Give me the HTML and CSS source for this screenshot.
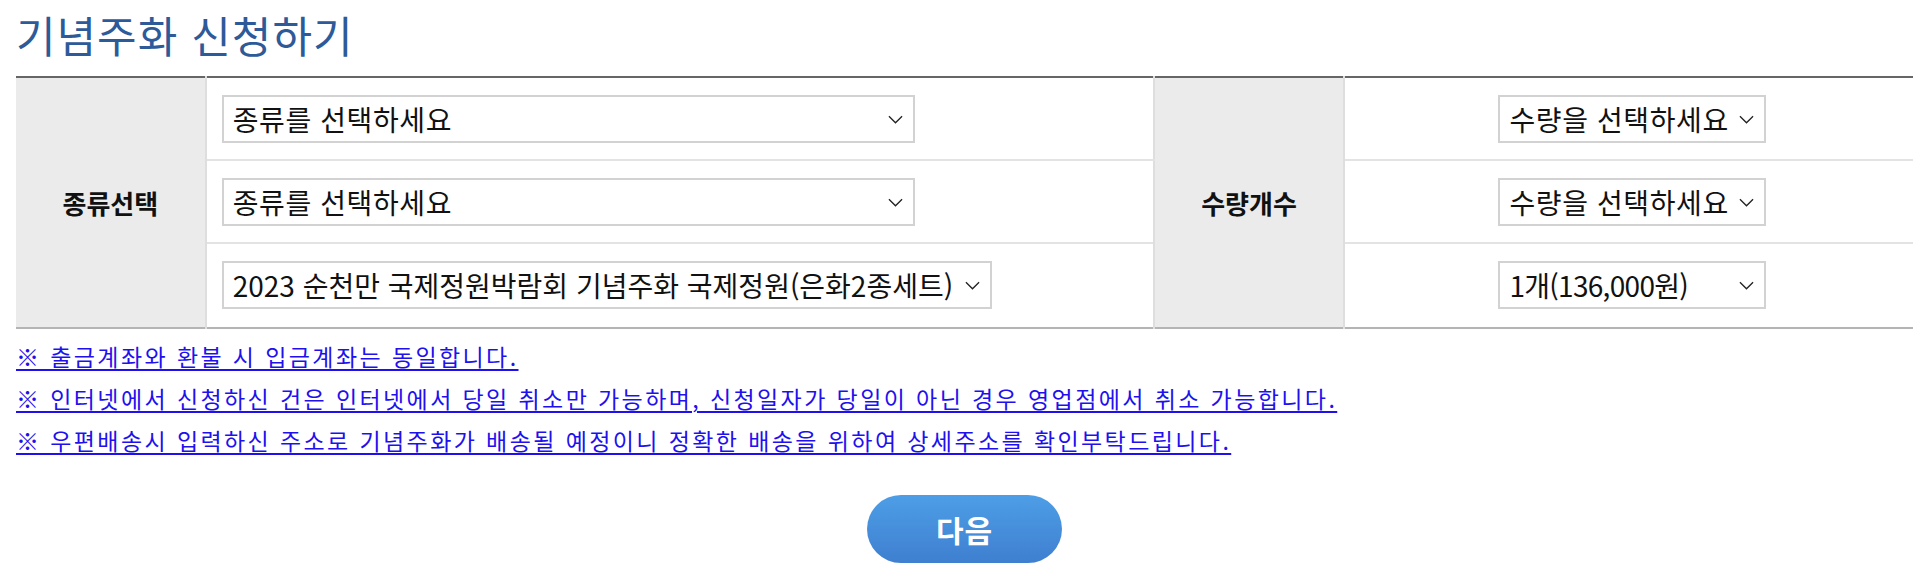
FILE: index.html
```html
<!DOCTYPE html>
<html lang="ko">
<head>
<meta charset="utf-8">
<title>기념주화 신청하기</title>
<link rel="stylesheet" href="styles.css">
</head>
<body>
<div class="wrap">
	<h2 class="tit">기념주화 신청하기</h2>

	<table class="apply">
		<colgroup>
			<col class="c_th"><col class="c_kind"><col class="c_th"><col>
		</colgroup>
		<tr>
			<th rowspan="3">종류선택</th>
			<td class="kind">
				<span class="sel w_kind"><select><option>종류를 선택하세요</option></select><svg viewBox="0 0 16 9"><path d="M1 1l7 7 7-7"/></svg></span>
			</td>
			<th rowspan="3">수량개수</th>
			<td class="qty">
				<span class="sel w_qty"><select><option>수량을 선택하세요</option></select><svg viewBox="0 0 16 9"><path d="M1 1l7 7 7-7"/></svg></span>
			</td>
		</tr>
		<tr>
			<td class="kind">
				<span class="sel w_kind"><select><option>종류를 선택하세요</option></select><svg viewBox="0 0 16 9"><path d="M1 1l7 7 7-7"/></svg></span>
			</td>
			<td class="qty">
				<span class="sel w_qty"><select><option>수량을 선택하세요</option></select><svg viewBox="0 0 16 9"><path d="M1 1l7 7 7-7"/></svg></span>
			</td>
		</tr>
		<tr>
			<td class="kind">
				<span class="sel w_long"><select><option>2023 순천만 국제정원박람회 기념주화 국제정원(은화2종세트)</option></select><svg viewBox="0 0 16 9"><path d="M1 1l7 7 7-7"/></svg></span>
			</td>
			<td class="qty">
				<span class="sel w_qty num"><select><option>1개(136,000원)</option></select><svg viewBox="0 0 16 9"><path d="M1 1l7 7 7-7"/></svg></span>
			</td>
		</tr>
	</table>

	<!-- 안내문구 -->
	<ul class="notice">
		<li><a href="#">※ 출금계좌와 환불 시 입금계좌는 동일합니다.</a></li>
		<li><a href="#">※ 인터넷에서 신청하신 건은 인터넷에서 당일 취소만 가능하며, 신청일자가 당일이 아닌 경우 영업점에서 취소 가능합니다.</a></li>
		<li><a href="#">※ 우편배송시 입력하신 주소로 기념주화가 배송될 예정이니 정확한 배송을 위하여 상세주소를 확인부탁드립니다.</a></li>
	</ul>

	<div class="btns"><a href="#" class="btn_next">다음</a></div>
</div>
</body>
</html>
```

FILE: styles.css
```css
*{font-family:"Noto Sans CJK KR","Noto Sans",sans-serif;}
body{margin:0;background:#fff;color:#111;}
.wrap{padding:0 15px 0 16px;}

.tit{margin:10px 0 18px;font-size:43px;line-height:48px;font-weight:normal;color:#2d5a99;letter-spacing:1px;}

/*신청 테이블*/
.apply{width:100%;border-collapse:collapse;border-top:2px solid #666;border-bottom:2px solid #b4b4b4;}
.apply .c_th{width:10%;}
.apply .c_kind{width:50%;}
.apply th{background:#ebebeb;border-left:2px solid #dedede;border-right:2px solid #dedede;font-size:26px;font-weight:bold;letter-spacing:0;color:#111;}
.apply th:first-child{border-left:0;}
.apply td{padding:17px 15px 16px;border-bottom:2px solid #e3e3e3;text-align:left;}
.apply tr:last-child td{border-bottom:0;padding-bottom:18px;}
.apply td.qty{text-align:center;padding-left:22px;}

.sel{position:relative;display:inline-block;vertical-align:top;}
.sel select{
	-webkit-appearance:none;
	appearance:none;
	display:block;
	width:100%;
	height:48px;
	margin:0;
	padding:0 32px 0 9px;
	border:2px solid #d2d2d2;
	border-radius:0;
	background:#fff;
	color:#111;
	font-size:28px;
	letter-spacing:0.6px;
	text-align:left;
}
.sel svg{position:absolute;right:12px;top:20px;width:15px;height:9px;pointer-events:none;}
.sel svg path{fill:none;stroke:#222;stroke-width:1.4;}
.w_kind{width:693px;}
.w_long{width:770px;}
.w_long select{letter-spacing:0;padding-right:28px;}
.w_qty{width:268px;}
.num select{letter-spacing:-0.7px;}

/*안내문구*/
.notice{list-style:none;margin:6px 0 0;padding:0;}
.notice li{font-size:23px;line-height:42px;}
.notice a{color:#2010ee;letter-spacing:2.4px;text-decoration:underline;text-underline-offset:3px;}

.btns{margin-top:34px;text-align:center;}
.btn_next{
	display:inline-block;
	width:195px;
	height:68px;
	line-height:68px;
	border-radius:34px;
	background-image:linear-gradient(#4d9ee6,#3f7fd0);
	color:#fff;
	font-size:30px;
	font-weight:bold;
	text-decoration:none;
	letter-spacing:1px;
}
```
